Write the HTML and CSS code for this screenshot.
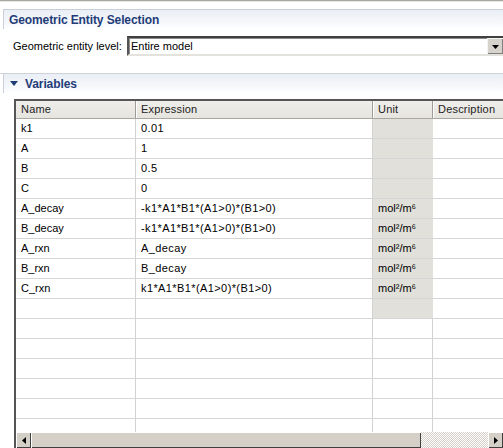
FILE: index.html
```html
<!DOCTYPE html>
<html>
<head>
<meta charset="utf-8">
<link rel="stylesheet" href="styles.css">
</head>
<body>
<div class="page">
  <div class="topstrip"></div>
  <div class="section-head first"><span class="title">Geometric Entity Selection</span></div>
  <div class="form-row">
    <label class="lbl">Geometric entity level:</label>
    <div class="combo">
      <span class="combo-text">Entire model</span>
      <div class="combo-btn"><svg width="7" height="4" viewBox="0 0 7 4"><path d="M0 0H7L3.5 4Z" fill="#000"/></svg></div>
    </div>
  </div>
  <div class="sep"></div>
  <div class="section-head vars">
    <svg class="tri" width="8" height="5" viewBox="0 0 8 5"><path d="M0 0H8L4 5Z" fill="#1f3c78"/></svg>
    <span class="title">Variables</span>
  </div>
  <div class="grid-frame">
    <div class="grid-head">
      <div class="hc c-name">Name</div>
      <div class="hc c-expr">Expression</div>
      <div class="hc c-unit">Unit</div>
      <div class="hc c-desc">Description</div>
    </div>
    <div class="grid-body">
      <div class="row"><div class="c c-name">k1</div><div class="c c-expr">0.01</div><div class="c c-unit g"></div><div class="c c-desc"></div></div>
      <div class="row"><div class="c c-name">A</div><div class="c c-expr">1</div><div class="c c-unit g"></div><div class="c c-desc"></div></div>
      <div class="row"><div class="c c-name">B</div><div class="c c-expr">0.5</div><div class="c c-unit g"></div><div class="c c-desc"></div></div>
      <div class="row"><div class="c c-name">C</div><div class="c c-expr">0</div><div class="c c-unit g"></div><div class="c c-desc"></div></div>
      <div class="row"><div class="c c-name">A_decay</div><div class="c c-expr">-k1*A1*B1*(A1&gt;0)*(B1&gt;0)</div><div class="c c-unit g">mol²/m⁶</div><div class="c c-desc"></div></div>
      <div class="row"><div class="c c-name">B_decay</div><div class="c c-expr">-k1*A1*B1*(A1&gt;0)*(B1&gt;0)</div><div class="c c-unit g">mol²/m⁶</div><div class="c c-desc"></div></div>
      <div class="row"><div class="c c-name">A_rxn</div><div class="c c-expr">A_decay</div><div class="c c-unit g">mol²/m⁶</div><div class="c c-desc"></div></div>
      <div class="row"><div class="c c-name">B_rxn</div><div class="c c-expr">B_decay</div><div class="c c-unit g">mol²/m⁶</div><div class="c c-desc"></div></div>
      <div class="row"><div class="c c-name">C_rxn</div><div class="c c-expr">k1*A1*B1*(A1&gt;0)*(B1&gt;0)</div><div class="c c-unit g">mol²/m⁶</div><div class="c c-desc"></div></div>
      <div class="row"><div class="c c-name"></div><div class="c c-expr"></div><div class="c c-unit g"></div><div class="c c-desc"></div></div>
      <div class="row"><div class="c c-name"></div><div class="c c-expr"></div><div class="c c-unit"></div><div class="c c-desc"></div></div>
      <div class="row"><div class="c c-name"></div><div class="c c-expr"></div><div class="c c-unit"></div><div class="c c-desc"></div></div>
      <div class="row"><div class="c c-name"></div><div class="c c-expr"></div><div class="c c-unit"></div><div class="c c-desc"></div></div>
      <div class="row"><div class="c c-name"></div><div class="c c-expr"></div><div class="c c-unit"></div><div class="c c-desc"></div></div>
      <div class="row"><div class="c c-name"></div><div class="c c-expr"></div><div class="c c-unit"></div><div class="c c-desc"></div></div>
      <div class="row"><div class="c c-name"></div><div class="c c-expr"></div><div class="c c-unit"></div><div class="c c-desc"></div></div>
    </div>
    <div class="hscroll">
      <div class="sbtn"><svg width="4" height="7" viewBox="0 0 4 7"><path d="M4 0V7L0 3.5Z" fill="#000"/></svg></div>
      <div class="thumb"></div>
      <div class="track"></div>
      <div class="sbtn"><svg width="4" height="7" viewBox="0 0 4 7"><path d="M0 0V7L4 3.5Z" fill="#000"/></svg></div>
    </div>
  </div>
</div>
</body>
</html>
```

FILE: styles.css
```css
html, body {
  margin: 0;
  padding: 0;
  background: #fff;
}
body {
  width: 503px;
  height: 448px;
  overflow: hidden;
  font-family: "Liberation Sans", Arial, sans-serif;
  font-size: 11px;
  color: #000;
}
.page {
  width: 503px;
  height: 448px;
  overflow: hidden;
  display: flex;
  flex-direction: column;
}
.topstrip {
  height: 1px;
  background: #aaa79f;
  border-bottom: 1px solid #e6e6e6;
  flex: none;
}
.section-head {
  flex: none;
  margin-left: 3px;
  height: 19px;
  border-top: 1px solid #c9ced8;
  border-left: 1px solid #c9ced8;
  background: linear-gradient(#eaeff6, #f6f8fb 70%, #ffffff);
  display: flex;
  align-items: center;
}
.section-head .title {
  font-weight: bold;
  font-size: 12px;
  color: #1f3c78;
  letter-spacing: -0.1px;
}
.first {
  margin-top: 7px;
}
.first .title {
  padding-left: 5px;
}
.form-row {
  flex: none;
  margin-top: 7px;
  height: 20px;
  display: flex;
  align-items: center;
}
.lbl {
  width: 114px;
  padding-left: 13px;
  flex: none;
  box-sizing: content-box;
  font-size: 11px;
}
.combo {
  flex: 1;
  height: 16px;
  border-top: 2px solid #404040;
  border-left: 2px solid #555;
  border-bottom: 2px solid #e4e2dc;
  display: flex;
  align-items: center;
  justify-content: space-between;
  box-shadow: inset 1px 1px 0 #8a8a8a;
}
.combo-text {
  padding-left: 2px;
}
.combo-btn {
  width: 15px;
  height: 15px;
  background: #d6d3cc;
  border-top: 1px solid #f4f4f4;
  border-left: 1px solid #f4f4f4;
  box-shadow: inset -1px -1px 0 #808080;
  display: flex;
  align-items: center;
  justify-content: center;
  margin-right: 0;
}
.sep {
  flex: none;
  margin-top: 17px;
  height: 1px;
  background: #cfd2d8;
}
.vars {
  height: 19px;
  border-top: none;
}
.tri {
  margin-left: 6px;
  margin-right: 7px;
}
.grid-frame {
  flex: none;
  margin-top: 6px;
  margin-left: 14px;
  width: 600px;
  height: 349px;
  border-top: 2px solid #555;
  border-left: 2px solid #555;
  display: flex;
  flex-direction: column;
}
.grid-head {
  flex: none;
  height: 17px;
  border-bottom: 1px solid #a9a79f;
  background: linear-gradient(#efeeea, #e6e4de);
  display: flex;
}
.hc {
  height: 17px;
  line-height: 17px;
  padding-left: 5px;
  box-sizing: border-box;
  border-right: 1px solid #9e9c94;
  box-shadow: inset 1px 0 0 #ffffff;
  color: #222;
  letter-spacing: 0.2px;
}
.hc.c-name {
  box-shadow: none;
}
.grid-body {
  flex: none;
  height: 313px;
  overflow: hidden;
}
.row {
  display: flex;
  height: 19px;
  border-bottom: 1px solid #d6d6d6;
}
.c {
  height: 19px;
  line-height: 19px;
  padding-left: 5px;
  box-sizing: border-box;
  border-right: 1px solid #d2d2d2;
  white-space: nowrap;
  overflow: hidden;
}
.c-name { width: 120px; flex: none; }
.c-expr { width: 237px; flex: none; }
.c.c-expr { letter-spacing: 0.4px; }
.c-unit { width: 60px; flex: none; }
.c-desc { width: 120px; flex: none; }
.g {
  background: #e1e0da;
  border-right-color: #e1e0da;
}
.c-unit.g {
  font-size: 11px;
}
.hscroll {
  flex: none;
  width: 487px;
  height: 16px;
  display: flex;
  background: #d4d0c8;
}
.sbtn {
  height: 15px;
  flex: none;
  background: #d4d0c8;
  border-top: 1px solid #ffffff;
  border-left: 1px solid #ffffff;
  box-shadow: inset -1px -1px 0 #404040;
  display: flex;
  align-items: center;
  justify-content: center;
  box-sizing: content-box;
  width: 14px;
}
.thumb {
  width: 389px;
  flex: none;
  height: 15px;
  background: #d4d0c8;
  border-top: 1px solid #ffffff;
  border-left: 1px solid #ffffff;
  box-shadow: inset -1px -1px 0 #404040;
}
.track {
  flex: 1;
  height: 16px;
  background: repeating-conic-gradient(#ffffff 0 25%, #d4d0c8 0 50%) 0 0 / 2px 2px;
}
```
